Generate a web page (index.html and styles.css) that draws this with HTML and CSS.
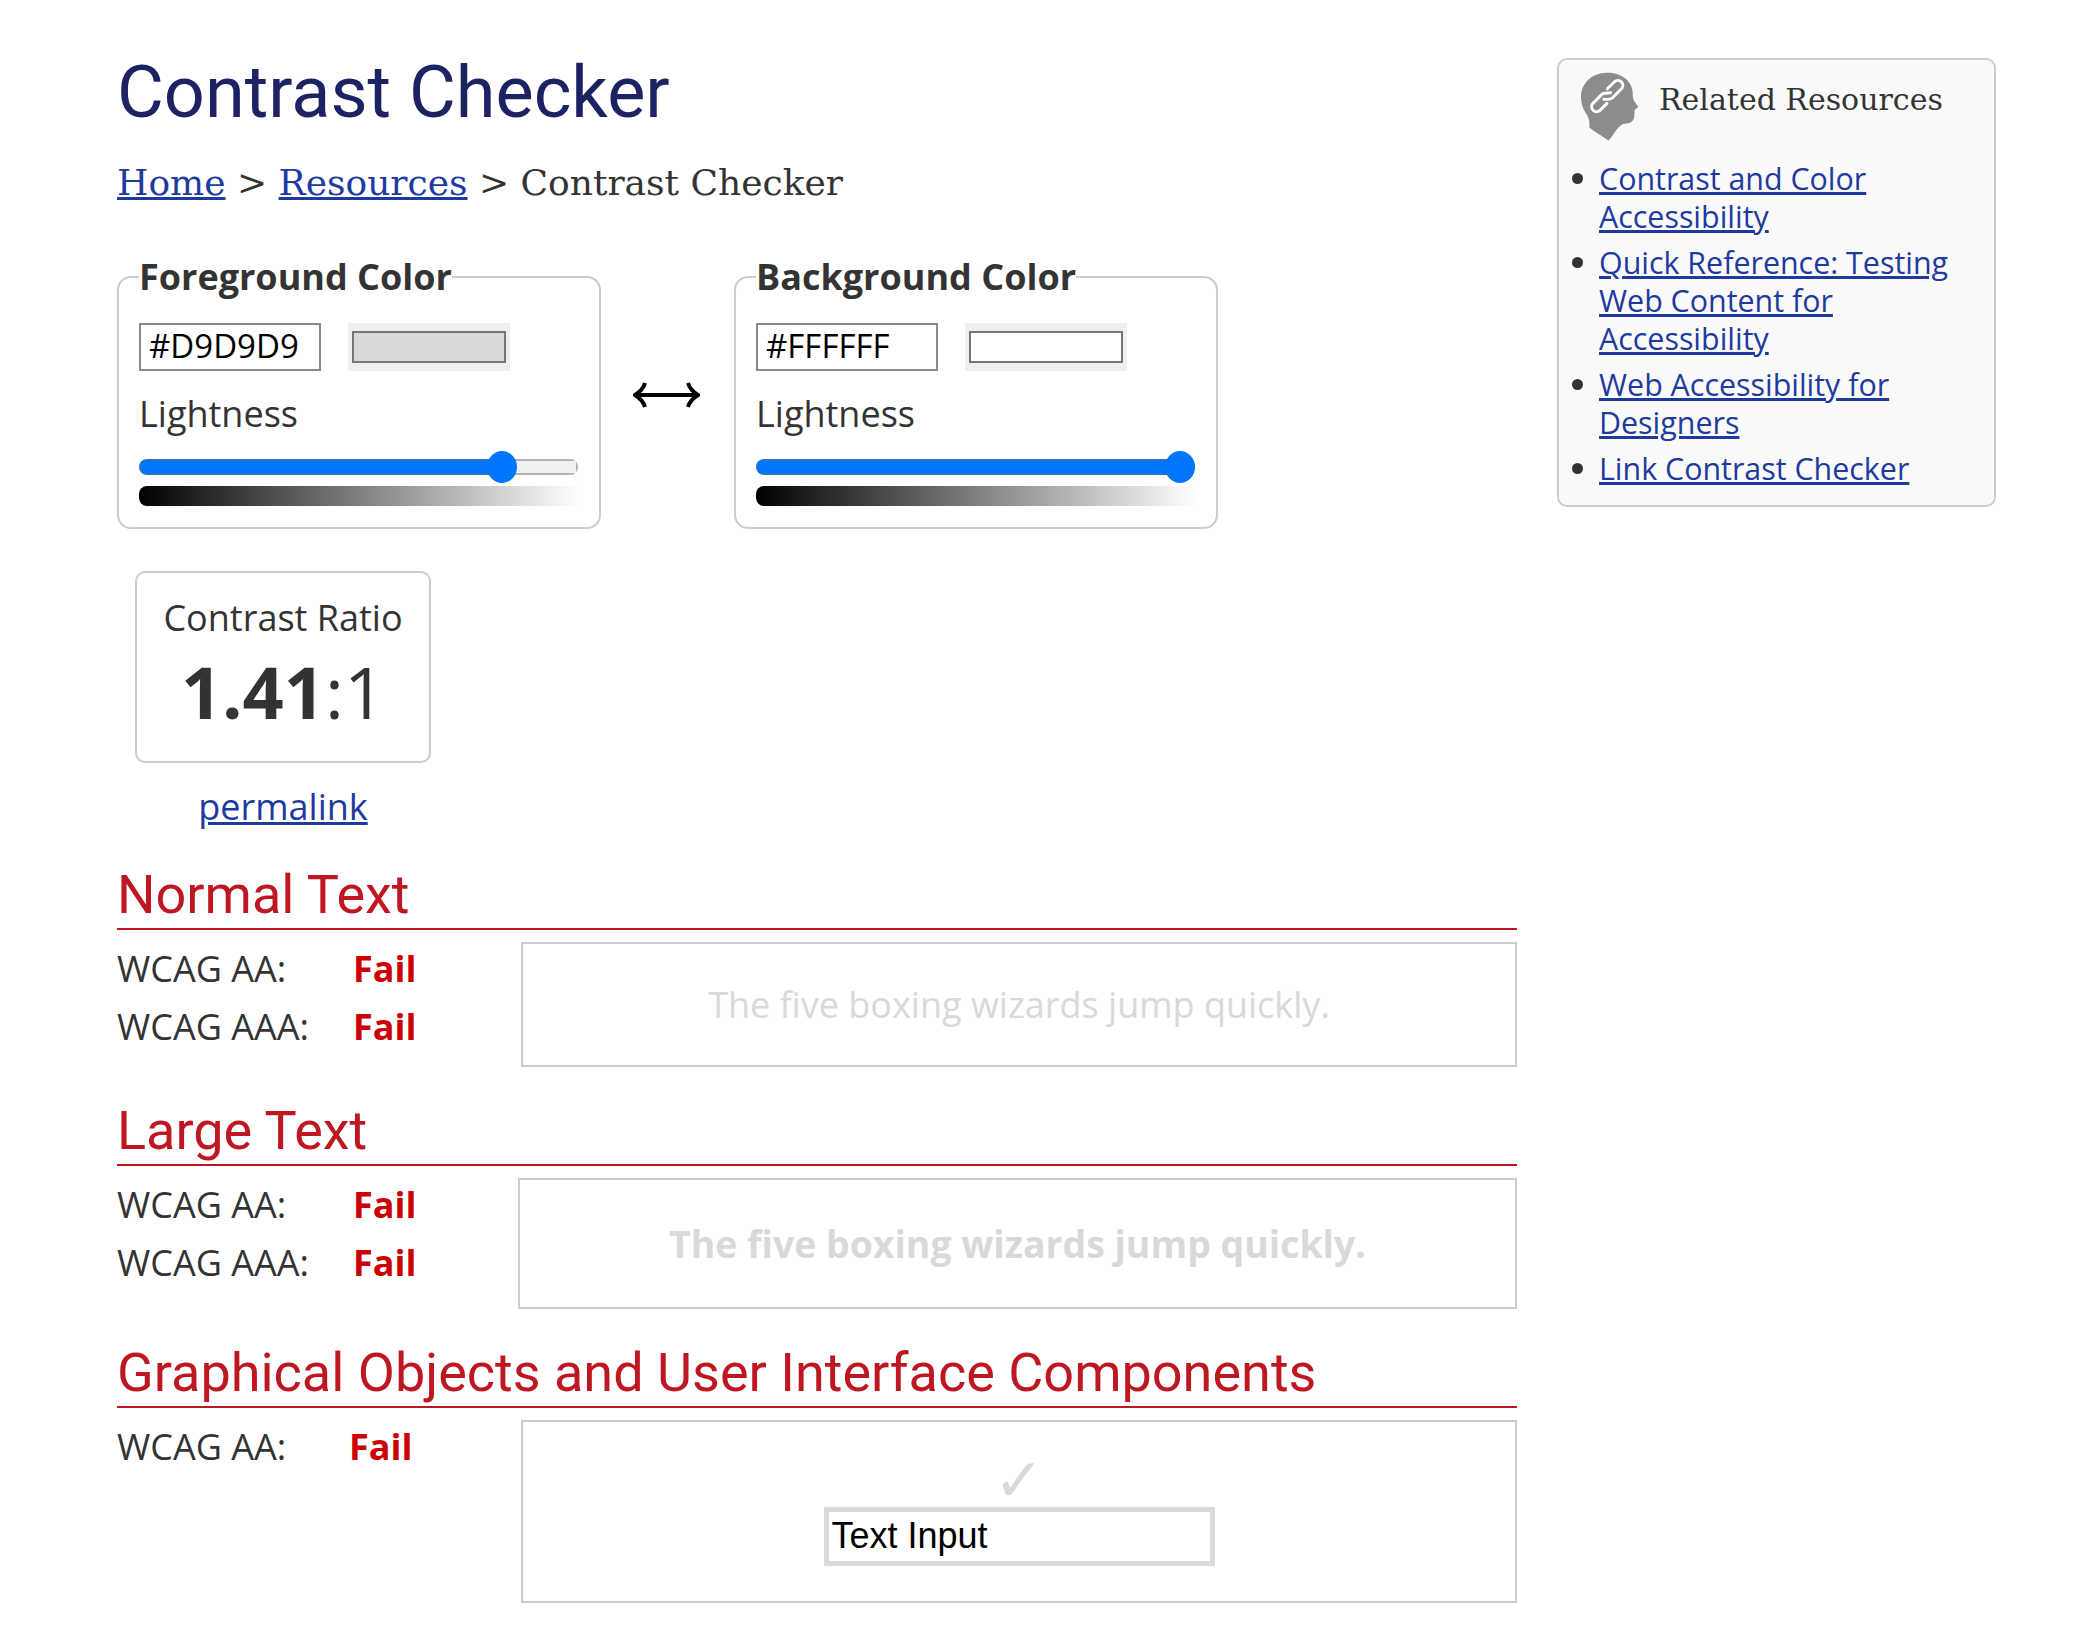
FILE: index.html
```html
<!DOCTYPE html>
<html lang="en">
<head>
<meta charset="utf-8">
<title>Contrast Checker</title>
<link rel="stylesheet" href="styles.css">
</head>
<body>
<div class="page">
  <main class="main">
    <h1 class="title">Contrast Checker</h1>
    <nav class="crumbs"><a href="#">Home</a> &gt; <a href="#">Resources</a> &gt; Contrast Checker</nav>
    <div class="pickers">
      <fieldset class="picker">
        <legend>Foreground Color</legend>
        <div class="color-row">
          <input class="hex" type="text" value="#D9D9D9" aria-label="Foreground hex">
          <input class="swatch" type="color" value="#d9d9d9" aria-label="Foreground swatch">
        </div>
        <label class="light-label">Lightness</label>
        <input class="slider" type="range" min="0" max="100" step="0.1" value="85.1" style="--fill:85.1%">
        <div class="ramp"></div>
      </fieldset>
      <svg class="swap" viewBox="0 0 67 28" aria-hidden="true"><path d="M2 14H65M12 2Q10 9 2 14Q10 19 12 26M55 2Q57 9 65 14Q57 19 55 26"/></svg>
      <fieldset class="picker">
        <legend>Background Color</legend>
        <div class="color-row">
          <input class="hex" type="text" value="#FFFFFF" aria-label="Background hex">
          <input class="swatch" type="color" value="#ffffff" aria-label="Background swatch">
        </div>
        <label class="light-label">Lightness</label>
        <input class="slider" type="range" min="0" max="100" step="0.1" value="100" style="--fill:100%">
        <div class="ramp"></div>
      </fieldset>
    </div>
    <div class="ratio-wrap">
      <div class="ratio">
        <div class="ratio-label">Contrast Ratio</div>
        <div class="ratio-value"><strong>1.41</strong>:1</div>
      </div>
      <a class="permalink" href="#">permalink</a>
    </div>

    <h2 class="section-title">Normal Text</h2>
    <section class="result">
      <div class="grades">
        <div class="grade"><span class="grade-name">WCAG AA:</span><strong class="fail">Fail</strong></div>
        <div class="grade"><span class="grade-name">WCAG AAA:</span><strong class="fail">Fail</strong></div>
      </div>
      <div class="sample sample-normal">The five boxing wizards jump quickly.</div>
    </section>

    <h2 class="section-title section-large">Large Text</h2>
    <section class="result">
      <div class="grades">
        <div class="grade"><span class="grade-name">WCAG AA:</span><strong class="fail">Fail</strong></div>
        <div class="grade"><span class="grade-name">WCAG AAA:</span><strong class="fail">Fail</strong></div>
      </div>
      <div class="sample sample-large">The five boxing wizards jump quickly.</div>
    </section>

    <h2 class="section-title section-graph">Graphical Objects and User Interface Components</h2>
    <section class="result">
      <div class="grades">
        <div class="grade grade-single"><span class="grade-name">WCAG AA:</span><strong class="fail">Fail</strong></div>
      </div>
      <div class="sample sample-ui">
        <span class="check">✓</span>
        <input class="ui-input" type="text" value="Text Input" aria-label="Text Input">
      </div>
    </section>
  </main>

  <aside class="side">
    <div class="side-head">
      <svg class="head-icon" viewBox="60 48 175 210" aria-hidden="true">
        <path class="head-shape" d="M140 50C188 50 216 80 216 112C216 122 217 130 222 138L233 152L221 163C222 180 222 196 206 201L187 204C172 210 166 226 143 255C125 240 100 228 85 215C88 195 82 182 74 170C64 155 60 140 60 122C60 85 90 50 140 50Z"/>
        <path class="chain" d="M139.7 98.1L160.9 76.9A15 15 0 0 1 182.1 98.1L153.8 126.4Q146.8 130.6 129.1 129.9M138.3 141.9L117.1 163.1A15 15 0 0 1 95.9 141.9L124.2 113.6Q131.2 110.6 148.9 110.1"/>
      </svg>
      <h2 class="side-title">Related Resources</h2>
    </div>
    <ul class="side-links">
      <li><a href="#">Contrast and Color Accessibility</a></li>
      <li><a href="#">Quick Reference: Testing Web Content for Accessibility</a></li>
      <li><a href="#">Web Accessibility for Designers</a></li>
      <li><a href="#">Link Contrast Checker</a></li>
    </ul>
  </aside>
</div>
</body>
</html>
```
FILE: styles.css
```css
* { box-sizing: border-box; }
html, body { margin: 0; background: #fff; }
body { font-family: "Open Sans", sans-serif; color: #333; font-size: 36px; }
a { color: #1e3a9f; }

.page { display: flex; align-items: flex-start; gap: 40px; padding: 58px 102px 36px 117px; }
.main { width: 1400px; flex: none; }
.side { width: 439px; flex: none; }

.title { margin: -5px 0 0; font: 400 72px/80px Roboto, sans-serif; color: #1d2362; }
.crumbs { font-family: "DejaVu Serif", serif; font-size: 36px; line-height: 44px; margin-top: 28px; }

.pickers { display: flex; align-items: center; margin-top: 47px; }
.picker { width: 484px; height: 277px; margin: 0; padding: 0 20px; border: 2px solid #ccc; border-radius: 14px; flex: none; }
.picker legend { padding: 0; font-size: 36px; line-height: 50px; font-weight: 700; }
.swap { width: 67px; height: 28px; margin: 8px 34px 0 32px; flex: none; fill: none; stroke: #000; stroke-width: 4; }
.color-row { display: flex; gap: 27px; margin-top: 21px; }
.hex { width: 182px; height: 48px; padding: 0 8px 3px; border: 2px solid #8a8a8a; font: 33px "Open Sans", sans-serif; color: #000; background: #fff; border-radius: 0; outline: 0; }
.swatch { width: 162px; height: 48px; padding: 0; border: 0; background: #efefef; }
.swatch::-webkit-color-swatch-wrapper { padding: 8px 4px; }
.swatch::-webkit-color-swatch { border: 2px solid #767676; border-radius: 0; }
.light-label { display: block; line-height: 44px; margin-top: 21px; }
.slider { display: block; width: 439px; height: 32px; margin: 15px 0 0; padding: 0; background: transparent; -webkit-appearance: none; appearance: none; }
.slider::-webkit-slider-runnable-track {
  height: 16px; border-radius: 8px;
  background:
    linear-gradient(to right, #0075ff var(--fill), #efefef var(--fill)) center / calc(100% - 4px) 12px no-repeat,
    linear-gradient(to right, #2c70c4 var(--fill), #b2b2b2 var(--fill));
}
.slider::-webkit-slider-thumb { -webkit-appearance: none; width: 30px; height: 32px; margin-top: -8px; border-radius: 50%; background: #0075ff; border: 0; }
.ramp { height: 20px; margin-top: 3px; border-radius: 8px 0 0 8px; background: linear-gradient(to right, #000, #fff); }

.ratio-wrap { width: 296px; margin: 42px 0 0 18px; display: flex; flex-direction: column; align-items: center; }
.ratio { width: 296px; height: 192px; border: 2px solid #ccc; border-radius: 10px; text-align: center; padding-top: 23px; }
.ratio-label { line-height: 44px; }
.ratio-value { font-size: 72px; line-height: 90px; margin-top: 6px; }
.permalink { line-height: 44px; margin-top: 22px; }

.section-title { margin: 35px 0 0; font: 400 54px/62px Roboto, sans-serif; color: #bf1722; border-bottom: 2px solid #bf1722; height: 66px; }
.section-large { margin-top: 33px; }
.section-graph { margin-top: 33px; }
.result { display: flex; justify-content: space-between; align-items: flex-start; margin-top: 12px; }
.grades { padding-top: 5px; }
.grade { display: flex; line-height: 44px; margin-bottom: 14px; }
.grade-name { width: 236px; }
.grade-single .grade-name { width: 232px; }
.fail { color: #c00; }
.sample { border: 2px solid #ccc; display: flex; align-items: center; justify-content: center; color: #d9d9d9; }
.sample-normal { width: 996px; height: 125px; font-size: 36px; }
.sample-large { width: 999px; height: 131px; font-size: 37.4px; font-weight: 700; }
.sample-ui { width: 996px; height: 183px; flex-direction: column; justify-content: flex-start; padding-top: 34px; }
.check { font: 60px/48px "DejaVu Sans", sans-serif; }
.ui-input { width: 391px; height: 59px; margin-top: 3px; padding: 0 3px 2px; border: 5px solid #d9d9d9; font: 36px "Liberation Sans", sans-serif; color: #000; background: #fff; outline: 0; border-radius: 0; }

.side { background: #fafafa; border: 2px solid #ccc; border-radius: 10px; height: 449px; padding: 12px 20px 0 22px; }
.side-head { display: flex; align-items: flex-start; gap: 20px; }
.head-icon { width: 58px; height: 70px; flex: none; }
.head-shape { fill: #8c8c8c; }
.chain { fill: none; stroke: #fff; stroke-width: 9; stroke-linecap: round; }
.side-title { margin: 8px 0 0; font: 400 30px/40px "DejaVu Serif", serif; }
.side-links { margin: 18px 0 0 -9px; padding: 0; list-style: none; font-size: 30.4px; line-height: 38px; }
.side-links li { display: flex; align-items: flex-start; gap: 16px; margin-bottom: 8px; }
.side-links li::before { content: ""; flex: none; width: 11px; height: 11px; margin-top: 13px; border-radius: 50%; background: #333; }
```
